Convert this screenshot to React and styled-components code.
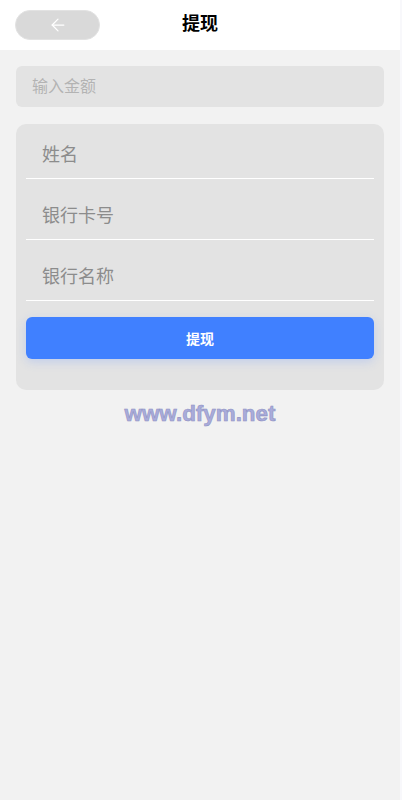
import React from "react";
import styled, { createGlobalStyle } from "styled-components";

const GlobalStyle = createGlobalStyle`
  html, body {
    margin: 0;
    padding: 0;
    background: #f8f8fb;
  }
  body {
    font-family: "Liberation Sans", "Noto Sans CJK SC", sans-serif;
  }
  * { box-sizing: border-box; }
`;

const Page = styled.div`
  width: 400px;
  min-height: 800px;
  background: #f2f2f2;
`;

const Header = styled.header`
  height: 50px;
  background: #fff;
  display: flex;
  align-items: center;
  padding: 0 15px;
  position: relative;
`;

const BackButton = styled.button`
  width: 85px;
  height: 30px;
  border-radius: 15px;
  background: #d9d9d9;
  border: 1px solid #e2e2e2;
  display: flex;
  align-items: center;
  justify-content: center;
  padding: 0;
  cursor: pointer;
`;

const Title = styled.h1`
  position: absolute;
  left: 0;
  right: 0;
  top: 13px;
  margin: 0;
  text-align: center;
  font-size: 18px;
  line-height: 22px;
  font-weight: bold;
  color: #000;
  pointer-events: none;
`;

const Content = styled.main`
  padding: 16px 16px 0;
  display: flex;
  flex-direction: column;
`;

const AmountInput = styled.input`
  height: 41px;
  border: none;
  outline: none;
  border-radius: 6px;
  background: #e3e3e3;
  padding: 0 16px;
  font-size: 16px;
  font-family: inherit;
  color: #333;
  &::placeholder { color: #b3b3b3; }
`;

const Card = styled.section`
  margin-top: 17px;
  background: #e3e3e3;
  border-radius: 10px;
  padding: 8px 10px 31px;
  display: flex;
  flex-direction: column;
`;

const Field = styled.input`
  height: 47px;
  margin-top: ${p => (p.first ? 0 : 14)}px;
  border: none;
  border-bottom: 1px solid #fff;
  background: transparent;
  outline: none;
  padding: 0 16px;
  font-size: 18px;
  font-family: inherit;
  color: #333;
  &::placeholder { color: #8c8c8c; }
`;

const SubmitButton = styled.button`
  margin-top: 16px;
  height: 42px;
  border: none;
  border-radius: 6px;
  background: #4080ff;
  color: #fff;
  font-size: 14px;
  font-weight: bold;
  font-family: inherit;
  box-shadow: 0 3px 10px rgba(120, 160, 255, 0.3);
  cursor: pointer;
`;

const Watermark = styled.div`
  margin-top: 11px;
  text-align: center;
  font-family: "Liberation Sans", Arial, sans-serif;
  font-weight: bold;
  font-size: 22.4px;
  color: #a9acdb;
  -webkit-text-stroke: 0.6px #8f91c2;
`;

export default function App() {
  return (
    <>
      <GlobalStyle />
      <Page>
        <Header>
          <BackButton aria-label="返回">
            <svg width="20" height="20" viewBox="0 0 24 24" fill="none" stroke="#fff" strokeWidth="1.5" strokeLinecap="round" strokeLinejoin="round">
              <path d="M19 12H5" />
              <path d="M12 19l-7-7 7-7" />
            </svg>
          </BackButton>
          <Title>提现</Title>
        </Header>
        <Content>
          <AmountInput placeholder="输入金额" />
          <Card>
            <Field first placeholder="姓名" />
            <Field placeholder="银行卡号" />
            <Field placeholder="银行名称" />
            <SubmitButton>提现</SubmitButton>
          </Card>
          <Watermark>www.dfym.net</Watermark>
        </Content>
      </Page>
    </>
  );
}
